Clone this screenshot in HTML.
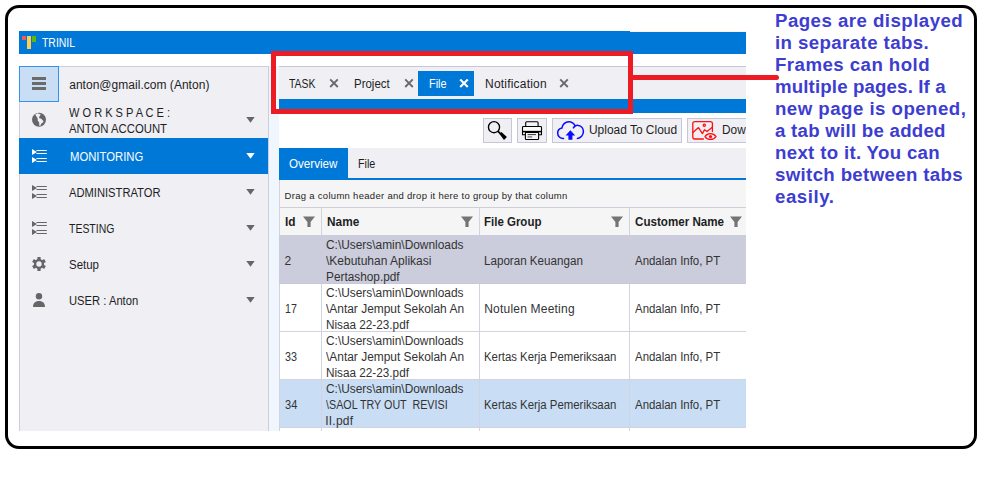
<!DOCTYPE html>
<html lang="en"><head><meta charset="utf-8"><title>TRINIL</title>
<style>
html,body{margin:0;padding:0;background:#fff;}
body{width:983px;height:478px;position:relative;overflow:hidden;font-family:"Liberation Sans", sans-serif;font-size:12px;}
#root div,#root span,#root svg{position:absolute;box-sizing:border-box;}
#root span{white-space:pre;line-height:1;}
#clip{left:0;top:0;width:746px;height:431px;overflow:hidden;}
</style></head><body><div id="root">
<div style="left:5px;top:5px;width:972px;height:444px;border:3px solid #000;border-radius:14px;"></div>
<div id="clip" style="position:absolute">
<!-- title bar -->
<div style="left:19px;top:31px;width:727px;height:23px;background:#0078d7;"></div>
<div style="left:630px;top:31px;width:116px;height:1px;background:#fdf0e8;"></div>
<div style="left:22px;top:36px;width:4px;height:4px;background:#f25a5a;"></div>
<div style="left:27px;top:36px;width:4px;height:13px;background:#ffce4d;"></div>
<div style="left:32px;top:36px;width:4px;height:6px;background:#5cb80a;"></div>
<!-- sidebar -->
<div style="left:19px;top:66px;width:250px;height:370px;background:#efeff4;border:1px solid #cdcddb;"></div>
<div style="left:19px;top:66px;width:40px;height:36px;background:#c9def5;border:1px solid #3093f5;"></div>
<div style="left:32px;top:77px;width:14px;height:3px;background:#6b6b6b;"></div>
<div style="left:32px;top:82px;width:14px;height:3px;background:#6b6b6b;"></div>
<div style="left:32px;top:87px;width:14px;height:3px;background:#6b6b6b;"></div>
<div style="left:19px;top:138px;width:249px;height:36px;background:#0078d7;"></div>
<!-- sidebar icons -->
<svg style="left:30px;top:111px" width="18" height="18" viewBox="0 0 18 18"><circle cx="9" cy="8.8" r="7" fill="#666"/><path d="M5.2 3.4 L7.5 2.3 L10.8 3.6 L9.4 5.6 L9 7 L11.2 7.8 L13.6 10.2 L12.6 11.8 L11.2 12.8 L10.2 15 L9.2 14.6 L9.2 11.6 L7.8 9.8 L7.6 7.2 L6 4.8 Z" fill="#efeff4"/></svg>
<svg style="left:30px;top:147px" width="20" height="18" viewBox="0 0 20 18"><g fill="#fff"><path d="M2 2 L7 5 L2 8Z M2 10 L7 13 L2 16Z"/><rect x="6.5" y="3" width="10.3" height="1"/><rect x="6.5" y="6" width="10.3" height="1"/><rect x="6.5" y="11" width="10.3" height="1"/><rect x="6.5" y="14" width="10.3" height="1"/></g></svg>
<svg style="left:30px;top:183px" width="20" height="18" viewBox="0 0 20 18"><g fill="#666"><path d="M2 2 L7 5 L2 8Z M2 10 L7 13 L2 16Z"/><rect x="6.5" y="3" width="10.3" height="1"/><rect x="6.5" y="6" width="10.3" height="1"/><rect x="6.5" y="11" width="10.3" height="1"/><rect x="6.5" y="14" width="10.3" height="1"/></g></svg>
<svg style="left:30px;top:219px" width="20" height="18" viewBox="0 0 20 18"><g fill="#666"><path d="M2 2 L7 5 L2 8Z M2 10 L7 13 L2 16Z"/><rect x="6.5" y="3" width="10.3" height="1"/><rect x="6.5" y="6" width="10.3" height="1"/><rect x="6.5" y="11" width="10.3" height="1"/><rect x="6.5" y="14" width="10.3" height="1"/></g></svg>
<!-- gear -->
<svg style="left:31px;top:256px" width="16" height="16" viewBox="0 0 16 16"><g transform="translate(8 8)" fill="#666"><circle r="5.1"/><g><rect x="-1.6" y="-7" width="3.2" height="14" rx="0.5"/><rect x="-1.6" y="-7" width="3.2" height="14" rx="0.5" transform="rotate(60)"/><rect x="-1.6" y="-7" width="3.2" height="14" rx="0.5" transform="rotate(120)"/></g><circle r="2.7" fill="#efeff4"/></g></svg>
<!-- user -->
<svg style="left:31px;top:290px" width="16" height="18" viewBox="0 0 16 18"><g fill="#666"><circle cx="8" cy="6.2" r="3.2"/><path d="M2 17 C2 13.2 4.2 11 8 11 C11.8 11 14 13.2 14 17 Z"/></g></svg>
<!-- sidebar arrows -->
<svg style="left:246px;top:117px" width="9" height="6" viewBox="0 0 9 6"><path d="M0.3 0H8.7L4.5 5.7Z" fill="#666"/></svg>
<svg style="left:246px;top:153px" width="9" height="6" viewBox="0 0 9 6"><path d="M0.3 0H8.7L4.5 5.7Z" fill="#fff"/></svg>
<svg style="left:246px;top:189px" width="9" height="6" viewBox="0 0 9 6"><path d="M0.3 0H8.7L4.5 5.7Z" fill="#666"/></svg>
<svg style="left:246px;top:225px" width="9" height="6" viewBox="0 0 9 6"><path d="M0.3 0H8.7L4.5 5.7Z" fill="#666"/></svg>
<svg style="left:246px;top:261px" width="9" height="6" viewBox="0 0 9 6"><path d="M0.3 0H8.7L4.5 5.7Z" fill="#666"/></svg>
<svg style="left:246px;top:297px" width="9" height="6" viewBox="0 0 9 6"><path d="M0.3 0H8.7L4.5 5.7Z" fill="#666"/></svg>
<!-- main background -->
<div style="left:269px;top:66px;width:477px;height:370px;background:#f0f6fd;"></div>
<div style="left:279px;top:66px;width:467px;height:370px;background:#fff;"></div>
<!-- tab strip -->
<div style="left:279px;top:66px;width:467px;height:33px;background:#efeff4;border-top:1px solid #c6c6d6;"></div>
<div style="left:418px;top:71px;width:56px;height:25px;background:#0078d7;"></div>
<div style="left:279px;top:99px;width:467px;height:14px;background:#0078d7;"></div>
<!-- tab close X -->
<svg style="left:328.5px;top:77.7px" width="10" height="10" viewBox="0 0 10 10"><path d="M1.2 1.4L8.8 9M8.8 1.4L1.2 9" stroke="#6a6a6a" stroke-width="1.9" fill="none"/></svg>
<svg style="left:403.5px;top:77.7px" width="10" height="10" viewBox="0 0 10 10"><path d="M1.2 1.4L8.8 9M8.8 1.4L1.2 9" stroke="#6a6a6a" stroke-width="1.9" fill="none"/></svg>
<svg style="left:459.4px;top:77.7px" width="10" height="10" viewBox="0 0 10 10"><path d="M1.2 1.4L8.8 9M8.8 1.4L1.2 9" stroke="#fff" stroke-width="2.1" fill="none"/></svg>
<svg style="left:559px;top:77.7px" width="10" height="10" viewBox="0 0 10 10"><path d="M1.2 1.4L8.8 9M8.8 1.4L1.2 9" stroke="#6a6a6a" stroke-width="1.9" fill="none"/></svg>
<!-- toolbar buttons -->
<div style="left:483px;top:118px;width:29px;height:25px;background:#efeff4;border:1px solid #c6c6d6;"></div>
<div style="left:517px;top:118px;width:30px;height:25px;background:#efeff4;border:1px solid #c6c6d6;"></div>
<div style="left:552px;top:118px;width:130px;height:25px;background:#efeff4;border:1px solid #c6c6d6;"></div>
<div style="left:687px;top:118px;width:80px;height:25px;background:#efeff4;border:1px solid #c6c6d6;"></div>
<!--TI0-->
<!-- magnifier -->
<svg style="left:483px;top:118px" width="29" height="25" viewBox="483 118 29 25"><circle cx="494" cy="127.2" r="5.55" fill="none" stroke="#000" stroke-width="1.35"/><path d="M497.8 131.2L500.6 133.8" stroke="#000" stroke-width="1.8" fill="none"/><path d="M499.3 133.7L501.4 131.9L506.9 137.1L504 139.9Z" fill="#000"/></svg>
<!-- printer -->
<svg style="left:517px;top:118px" width="30" height="25" viewBox="517 118 30 25"><g fill="#f4f4f7" stroke="#000" stroke-width="1.1" stroke-linejoin="round"><rect x="525.7" y="121.7" width="12.4" height="5" rx="1"/><rect x="522.5" y="126.5" width="19" height="5" rx="0.9" fill="#fafafb"/><path d="M522.5 131V134.7H525.4M541.5 131V134.7H538.6" fill="none"/><rect x="525.4" y="132.4" width="13.2" height="7.1" rx="0.8"/></g><path d="M522.2 131.6H541.8" stroke="#000" stroke-width="1.5"/><path d="M527.6 134.6H536" stroke="#222" stroke-width="0.9"/><path d="M527.6 136.9H532.2" stroke="#777" stroke-width="1.4"/></svg>
<!-- cloud upload -->
<svg style="left:555px;top:119px" width="31" height="23" viewBox="555 119 31 23"><path d="M563.6 138.4C560.2 138.6 557.7 136.2 557.7 133.2C557.7 130.4 559.6 128.5 561.9 128.1C562.3 124.6 565.2 121.8 568.8 121.8C571.6 121.8 573.9 123.4 575.1 125.9C576.2 125.4 577.3 125.2 578.4 125.4C581.3 125.8 583.4 128.4 583.4 131.6C583.4 135.4 580.6 138.2 577.4 138.4M575.3 126C574.4 126.5 573.8 127.1 573.4 127.9" fill="none" stroke="#0a0aff" stroke-width="1.5" stroke-linecap="round"/><path d="M570.4 130.2L575.2 135.6H572.4V139.8H568.4V135.6H565.6Z" fill="#0a0aff"/></svg>
<!-- image/eye (download) -->
<svg style="left:690px;top:119px" width="28" height="23" viewBox="690 119 28 23"><g fill="none" stroke="#ff1010" stroke-width="1.3" stroke-linejoin="round" stroke-linecap="round"><path d="M703.4 139H694.8C693.6 139 692.8 138.2 692.8 137V123.6C692.8 122.4 693.6 121.6 694.8 121.6H710.4C711.6 121.6 712.4 122.4 712.4 123.6V131.6"/><path d="M692.9 132.6L698.5 127.6L702.4 133.6L704.5 129.7L707 131.6L712.3 127.2"/><circle cx="704.3" cy="125.3" r="1.1"/><path d="M705 136.6C707.4 132.6 713.4 132.6 716 136.6C713.4 140.4 707.4 140.4 705 136.6Z"/></g><circle cx="710.5" cy="136.6" r="1.6" fill="#ff1010"/></svg>
<!--TI1-->
<!-- inner tabs -->
<div style="left:279px;top:148px;width:467px;height:30px;background:#efeff4;"></div>
<div style="left:279px;top:148px;width:69px;height:30px;background:#0078d7;"></div>
<div style="left:279px;top:178px;width:467px;height:2px;background:#0078d7;"></div>
<!-- group panel -->
<div style="left:279px;top:180px;width:467px;height:27px;background:#f5f5f6;border-left:1px solid #d2d2e0;"></div>
<!-- header -->
<div style="left:279px;top:207px;width:467px;height:28px;background:#f5f5f6;border-top:1px solid #cfcfdc;"></div>
<!-- rows -->
<div style="left:279px;top:283px;width:467px;height:1px;background:#d2d2e0;"></div>
<div style="left:279px;top:331px;width:467px;height:1px;background:#d2d2e0;"></div>
<div style="left:279px;top:379px;width:467px;height:1px;background:#d2d2e0;"></div>
<div style="left:279px;top:380px;width:467px;height:47px;background:#c9def5;"></div>
<div style="left:279px;top:427px;width:467px;height:1px;background:#d2d2e0;"></div>
<!-- col separators -->
<div style="left:279px;top:207px;width:1px;height:230px;background:#d2d2e0;"></div>
<div style="left:321px;top:208px;width:1px;height:230px;background:#d2d2e0;"></div>
<div style="left:479px;top:208px;width:1px;height:230px;background:#d2d2e0;"></div>
<div style="left:629px;top:208px;width:1px;height:230px;background:#d2d2e0;"></div>
<!-- selected row (covers separators) -->
<div style="left:279px;top:235px;width:467px;height:49px;background:#cbccdc;border-bottom:1px solid #c6c7d8;"></div>
<!-- filter icons -->
<svg style="left:303px;top:216px" width="12" height="11" viewBox="0 0 12 11"><path d="M0 0.4H12L7.6 5.9V11H4.4V5.9Z" fill="#747474"/></svg>
<svg style="left:461px;top:216px" width="12" height="11" viewBox="0 0 12 11"><path d="M0 0.4H12L7.6 5.9V11H4.4V5.9Z" fill="#747474"/></svg>
<svg style="left:611px;top:216px" width="12" height="11" viewBox="0 0 12 11"><path d="M0 0.4H12L7.6 5.9V11H4.4V5.9Z" fill="#747474"/></svg>
<svg style="left:730px;top:216px" width="12" height="11" viewBox="0 0 12 11"><path d="M0 0.4H12L7.6 5.9V11H4.4V5.9Z" fill="#747474"/></svg>
<span style="left:42.00px;top:36.84px;font-size:12px;font-weight:400;color:#fff;transform:scaleX(0.8688);transform-origin:0 0;">TRINIL</span>
<span style="left:69.20px;top:78.84px;font-size:12px;font-weight:400;color:#1e1e1e;letter-spacing:0.028px;">anton@gmail.com (Anton)</span>
<span style="left:69.20px;top:106.84px;font-size:12px;font-weight:400;color:#1e1e1e;transform:scaleX(0.9197);transform-origin:0 0;">W O R K S P A C E :</span>
<span style="left:69.20px;top:122.84px;font-size:12px;font-weight:400;color:#1e1e1e;transform:scaleX(0.9446);transform-origin:0 0;">ANTON ACCOUNT</span>
<span style="left:69.50px;top:150.84px;font-size:12px;font-weight:400;color:#fff;transform:scaleX(0.9413);transform-origin:0 0;">MONITORING</span>
<span style="left:69.20px;top:186.84px;font-size:12px;font-weight:400;color:#1e1e1e;transform:scaleX(0.9314);transform-origin:0 0;">ADMINISTRATOR</span>
<span style="left:69.20px;top:222.84px;font-size:12px;font-weight:400;color:#1e1e1e;transform:scaleX(0.8729);transform-origin:0 0;">TESTING</span>
<span style="left:69.20px;top:258.84px;font-size:12px;font-weight:400;color:#1e1e1e;transform:scaleX(0.9563);transform-origin:0 0;">Setup</span>
<span style="left:69.20px;top:294.84px;font-size:12px;font-weight:400;color:#1e1e1e;transform:scaleX(0.9348);transform-origin:0 0;">USER : Anton</span>
<span style="left:289.30px;top:77.84px;font-size:12px;font-weight:400;color:#1e1e1e;transform:scaleX(0.8671);transform-origin:0 0;">TASK</span>
<span style="left:353.90px;top:77.84px;font-size:12px;font-weight:400;color:#1e1e1e;transform:scaleX(0.9549);transform-origin:0 0;">Project</span>
<span style="left:428.50px;top:77.84px;font-size:12px;font-weight:400;color:#fff;transform:scaleX(0.9104);transform-origin:0 0;">File</span>
<span style="left:485.00px;top:77.84px;font-size:12px;font-weight:400;color:#1e1e1e;letter-spacing:0.210px;">Notification</span>
<span style="left:589.40px;top:124.34px;font-size:12px;font-weight:400;color:#1e1e1e;transform:scaleX(0.9949);transform-origin:0 0;">Upload To Cloud</span>
<span style="left:722.00px;top:124.34px;font-size:12px;font-weight:400;color:#1e1e1e;transform:scaleX(0.9860);transform-origin:0 0;">Dow</span>
<span style="left:289.00px;top:157.84px;font-size:12px;font-weight:400;color:#fff;transform:scaleX(0.9673);transform-origin:0 0;">Overview</span>
<span style="left:358.40px;top:157.84px;font-size:12px;font-weight:400;color:#1e1e1e;transform:scaleX(0.8951);transform-origin:0 0;">File</span>
<span style="left:284.60px;top:190.96px;font-size:9.5px;font-weight:400;color:#1e1e1e;letter-spacing:0.293px;">Drag a column header and drop it here to group by that column</span>
<span style="left:284.50px;top:215.84px;font-size:12px;font-weight:700;color:#1e1e1e;transform:scaleX(0.9870);transform-origin:0 0;">Id</span>
<span style="left:326.80px;top:215.84px;font-size:12px;font-weight:700;color:#1e1e1e;transform:scaleX(0.9876);transform-origin:0 0;">Name</span>
<span style="left:484.40px;top:215.84px;font-size:12px;font-weight:700;color:#1e1e1e;transform:scaleX(0.9569);transform-origin:0 0;">File Group</span>
<span style="left:634.60px;top:215.84px;font-size:12px;font-weight:700;color:#1e1e1e;transform:scaleX(0.9680);transform-origin:0 0;">Customer Name</span>
<span style="left:284.60px;top:254.84px;font-size:12px;font-weight:400;color:#333;">2</span>
<span style="left:326.20px;top:238.84px;font-size:12px;font-weight:400;color:#333;transform:scaleX(0.9912);transform-origin:0 0;">C:\Users\amin\Downloads</span>
<span style="left:326.20px;top:254.84px;font-size:12px;font-weight:400;color:#333;transform:scaleX(0.9999);transform-origin:0 0;">\Kebutuhan Aplikasi</span>
<span style="left:326.20px;top:270.84px;font-size:12px;font-weight:400;color:#333;transform:scaleX(0.9856);transform-origin:0 0;">Pertashop.pdf</span>
<span style="left:484.20px;top:254.84px;font-size:12px;font-weight:400;color:#333;transform:scaleX(0.9683);transform-origin:0 0;">Laporan Keuangan</span>
<span style="left:634.70px;top:254.84px;font-size:12px;font-weight:400;color:#333;transform:scaleX(0.9527);transform-origin:0 0;">Andalan Info, PT</span>
<span style="left:284.60px;top:302.84px;font-size:12px;font-weight:400;color:#333;transform:scaleX(0.8849);transform-origin:0 0;">17</span>
<span style="left:326.20px;top:286.84px;font-size:12px;font-weight:400;color:#333;transform:scaleX(0.9912);transform-origin:0 0;">C:\Users\amin\Downloads</span>
<span style="left:326.20px;top:302.84px;font-size:12px;font-weight:400;color:#333;transform:scaleX(0.9947);transform-origin:0 0;">\Antar Jemput Sekolah An</span>
<span style="left:326.20px;top:318.84px;font-size:12px;font-weight:400;color:#333;transform:scaleX(0.9791);transform-origin:0 0;">Nisaa 22-23.pdf</span>
<span style="left:484.20px;top:302.84px;font-size:12px;font-weight:400;color:#333;letter-spacing:0.213px;">Notulen Meeting</span>
<span style="left:634.70px;top:302.84px;font-size:12px;font-weight:400;color:#333;transform:scaleX(0.9527);transform-origin:0 0;">Andalan Info, PT</span>
<span style="left:284.60px;top:350.84px;font-size:12px;font-weight:400;color:#333;transform:scaleX(0.8995);transform-origin:0 0;">33</span>
<span style="left:326.20px;top:334.84px;font-size:12px;font-weight:400;color:#333;transform:scaleX(0.9912);transform-origin:0 0;">C:\Users\amin\Downloads</span>
<span style="left:326.20px;top:350.84px;font-size:12px;font-weight:400;color:#333;transform:scaleX(0.9947);transform-origin:0 0;">\Antar Jemput Sekolah An</span>
<span style="left:326.20px;top:366.84px;font-size:12px;font-weight:400;color:#333;transform:scaleX(0.9791);transform-origin:0 0;">Nisaa 22-23.pdf</span>
<span style="left:484.20px;top:350.84px;font-size:12px;font-weight:400;color:#333;transform:scaleX(0.9494);transform-origin:0 0;">Kertas Kerja Pemeriksaan</span>
<span style="left:634.70px;top:350.84px;font-size:12px;font-weight:400;color:#333;transform:scaleX(0.9527);transform-origin:0 0;">Andalan Info, PT</span>
<span style="left:284.60px;top:398.84px;font-size:12px;font-weight:400;color:#333;transform:scaleX(0.9215);transform-origin:0 0;">34</span>
<span style="left:326.20px;top:382.84px;font-size:12px;font-weight:400;color:#333;transform:scaleX(0.9912);transform-origin:0 0;">C:\Users\amin\Downloads</span>
<span style="left:326.20px;top:398.84px;font-size:12px;font-weight:400;color:#333;transform:scaleX(0.8939);transform-origin:0 0;">\SAOL TRY OUT  REVISI</span>
<span style="left:325.20px;top:414.84px;font-size:12px;font-weight:400;color:#333;letter-spacing:0.230px;">II.pdf</span>
<span style="left:484.20px;top:398.84px;font-size:12px;font-weight:400;color:#333;transform:scaleX(0.9494);transform-origin:0 0;">Kertas Kerja Pemeriksaan</span>
<span style="left:634.70px;top:398.84px;font-size:12px;font-weight:400;color:#333;transform:scaleX(0.9527);transform-origin:0 0;">Andalan Info, PT</span>
</div>
<!-- red callout -->
<div style="left:271px;top:51px;width:362px;height:63px;border:5px solid #ed1c24;"></div>
<div style="left:633px;top:75px;width:146px;height:5px;background:#ed1c24;border-radius:0 2.5px 2.5px 0;"></div>
<span style="left:775.00px;top:11.80px;font-size:18.67px;font-weight:700;color:#3d3dd1;letter-spacing:0.461px;">Pages are displayed</span>
<span style="left:775.00px;top:33.80px;font-size:18.67px;font-weight:700;color:#3d3dd1;letter-spacing:0.403px;">in separate tabs.</span>
<span style="left:775.00px;top:55.80px;font-size:18.67px;font-weight:700;color:#3d3dd1;letter-spacing:0.453px;">Frames can hold</span>
<span style="left:775.00px;top:77.80px;font-size:18.67px;font-weight:700;color:#3d3dd1;letter-spacing:0.144px;">multiple pages. If a</span>
<span style="left:775.00px;top:99.80px;font-size:18.67px;font-weight:700;color:#3d3dd1;letter-spacing:0.468px;">new page is opened,</span>
<span style="left:775.00px;top:121.80px;font-size:18.67px;font-weight:700;color:#3d3dd1;letter-spacing:0.257px;">a tab will be added</span>
<span style="left:775.00px;top:143.80px;font-size:18.67px;font-weight:700;color:#3d3dd1;letter-spacing:0.318px;">next to it. You can</span>
<span style="left:775.00px;top:165.80px;font-size:18.67px;font-weight:700;color:#3d3dd1;letter-spacing:0.342px;">switch between tabs</span>
<span style="left:775.00px;top:187.80px;font-size:18.67px;font-weight:700;color:#3d3dd1;letter-spacing:0.553px;">easily.</span>
</div></body></html>
